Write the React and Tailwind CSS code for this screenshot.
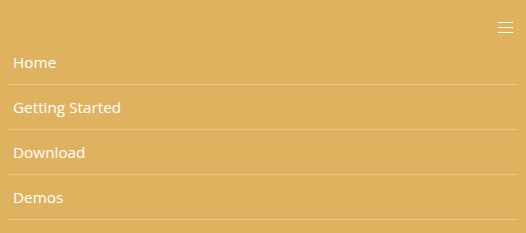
const links = ["Home", "Getting Started", "Download", "Demos"];

export default function App() {
  return (
    <div className="h-[233px] w-full bg-[#dfb260] px-2 text-white font-['Open_Sans',sans-serif]">
      <div className="flex h-10 items-start justify-end pt-[22px] pr-[5px]">
        <button className="block focus:outline-none" aria-label="Menu">
          <svg width="15" height="11" viewBox="0 0 15 11">
            <rect x="0" y="0" width="15" height="1" fill="#fff" />
            <rect x="0" y="5" width="15" height="1" fill="#fff" />
            <rect x="0" y="10" width="15" height="1" fill="#fff" />
          </svg>
        </button>
      </div>
      <ul>
        {links.map((label) => (
          <li
            key={label}
            className="flex h-[45px] items-center border-b border-[#e9c98a] pl-[5px] text-[15.3px]"
          >
            {label}
          </li>
        ))}
      </ul>
    </div>
  );
}
